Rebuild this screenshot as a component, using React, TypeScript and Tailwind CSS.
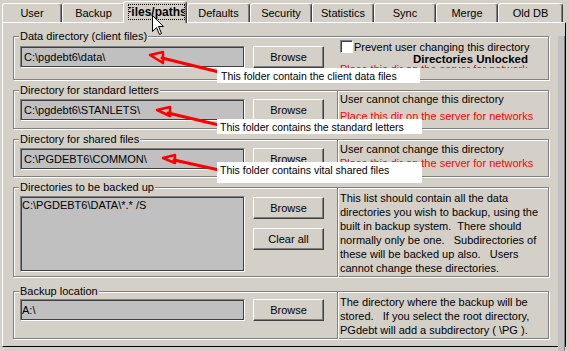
import React from "react";

type Kids = { children?: React.ReactNode; className?: string };

const Btn = ({ children, className = "" }: Kids) => (
  <div
    className={`flex h-[22px] w-[71px] items-center justify-center border border-t-white border-l-white border-r-[#404040] border-b-[#404040] bg-[#d4d0c8] shadow-[inset_-1px_-1px_0_#808080] ${className}`}
  >
    {children}
  </div>
);

const Field = ({ children, className = "" }: Kids) => (
  <div
    className={`flex h-[22px] w-[225px] items-center whitespace-nowrap border border-t-[#808080] border-l-[#808080] border-r-white border-b-white bg-[#c0c0c0] shadow-[inset_1px_1px_0_#404040,inset_-1px_-1px_0_#404040] ${className}`}
  >
    {children}
  </div>
);

const Group = ({ title, children, className = "" }: Kids & { title: string }) => (
  <div className={`relative border border-[#808080] shadow-[inset_1px_1px_0_#fff,1px_1px_0_#fff] ${className}`}>
    <span className="absolute -top-[7px] left-[5px] bg-[#d4d0c8] px-[1px] leading-[13px]">{title}</span>
    {children}
  </div>
);

const Note = ({ children, className = "" }: Kids) => (
  <div className={`border border-l-0 border-[#808080] pl-[2px] shadow-[inset_1px_1px_0_#fff,1px_1px_0_#fff] ${className}`}>
    {children}
  </div>
);

const Tab = ({ label, w }: { label: string; w: string }) => (
  <div
    className={`${w} flex h-[19px] items-center justify-center rounded-t-[3px] border-t border-l border-r border-t-white border-l-white border-r-[#404040] bg-[#d4d0c8] shadow-[inset_-1px_0_0_#808080]`}
  >
    {label}
  </div>
);

export default function App() {
  return (
    <div className="relative h-[351px] w-[569px] overflow-hidden bg-[#d4d0c8] font-['Liberation_Sans',Arial,sans-serif] text-[11px] leading-[13px] text-black">
      {/* tab strip */}
      <div className="flex h-[22px] items-end pl-[2px]">
        <Tab label="User" w="w-[60px]" />
        <Tab label="Backup" w="w-[63px]" />
        <div className="relative z-10 -mb-[1px] -ml-[2px] flex h-[22px] w-[64px] items-start rounded-t-[3px] border-t border-l border-r border-t-white border-l-white border-r-[#404040] bg-[#d4d0c8] pl-[4px] pt-[2px] shadow-[inset_-1px_0_0_#808080]">
          <div className="flex h-[16px] w-[57px] items-center overflow-hidden border border-dotted border-black px-[1px]">
            <span className="-ml-[6px] whitespace-nowrap text-[12px] font-bold">Files/paths</span>
          </div>
        </div>
        <Tab label="Defaults" w="w-[63px]" />
        <Tab label="Security" w="w-[62px]" />
        <Tab label="Statistics" w="w-[62px]" />
        <Tab label="Sync" w="w-[62px]" />
        <Tab label="Merge" w="w-[62px]" />
        <Tab label="Old DB" w="w-[65px]" />
      </div>

      {/* tab page */}
      <div className="ml-[2px] h-[325px] w-[564px] border border-t-white border-l-white border-r-black border-b-black">
        <div className="h-full border-r border-b border-[#808080]">
          <div className="h-full border-r-[6px] border-b-[2px] border-[#c0c0c0] pl-[10px]">
            {/* data directory */}
            <Group title="Data directory (client files)" className="mt-[13px] flex h-[44px] w-[536px]">
              <div className="flex gap-[8px] pl-[6px] pt-[9px]">
                <Field className="pl-[3px]">{"C:\\pgdebt6\\data\\"}</Field>
                <Btn>Browse</Btn>
              </div>
              <div className="ml-[16px] w-[188px] pt-[3px] leading-[12px]">
                <div className="flex h-[13px] items-center gap-[1px] whitespace-nowrap">
                  <div className="h-[13px] w-[13px] shrink-0 border border-t-[#808080] border-l-[#808080] border-r-white border-b-white bg-white shadow-[inset_1px_1px_0_#404040]" />
                  <span>Prevent user changing this directory</span>
                </div>
                <div className="whitespace-nowrap text-right text-[11.5px] font-bold">Directories Unlocked</div>
                {/* this line is clipped by the control below it */}
                <div className="-mt-[1px] h-[4px] overflow-hidden">
                  <div className="-mt-[1px] whitespace-nowrap text-[#ff0000]">Place this dir on the server for networks</div>
                </div>
              </div>
            </Group>

            {/* standard letters */}
            <div className="mt-[10px] flex">
              <Group title="Directory for standard letters" className="flex h-[39px] w-[325px] gap-[8px] pl-[6px] pt-[8px]">
                <Field className="pl-[3px]">{"C:\\pgdebt6\\STANLETS\\"}</Field>
                <Btn>Browse</Btn>
              </Group>
              <Note className="h-[39px] w-[211px] whitespace-nowrap pt-[2px] leading-[12px]">
                <div>User cannot change this directory</div>
                <div className="mt-[5px] text-[#ff0000]">Place this dir on the server for networks</div>
              </Note>
            </div>

            {/* shared files */}
            <div className="mt-[10px] flex">
              <Group title="Directory for shared files" className="flex h-[38px] w-[325px] gap-[8px] pl-[6px] pt-[8px]">
                <Field className="pl-[3px]">{"C:\\PGDEBT6\\COMMON\\"}</Field>
                <Btn>Browse</Btn>
              </Group>
              <Note className="h-[38px] w-[211px] whitespace-nowrap pt-[3px] leading-[12px]">
                <div>User cannot change this directory</div>
                <div className="mt-[2px] text-[#ff0000]">Place this dir on the server for networks</div>
              </Note>
            </div>

            {/* backup list */}
            <div className="mt-[10px] flex">
              <Group title="Directories to be backed up" className="flex h-[90px] w-[325px] gap-[8px] pl-[6px] pt-[8px]">
                <div className="h-[76px] w-[225px] whitespace-nowrap border border-t-[#808080] border-l-[#808080] border-r-white border-b-white bg-[#c0c0c0] pl-[1px] pt-[2px] shadow-[inset_1px_1px_0_#404040,inset_-1px_-1px_0_#404040]">
                  {"C:\\PGDEBT6\\DATA\\*.* /S"}
                </div>
                <div className="flex flex-col gap-[9px] pt-[1px]">
                  <Btn>Browse</Btn>
                  <Btn>Clear all</Btn>
                </div>
              </Group>
              <Note className="h-[90px] w-[211px] whitespace-pre pt-[3px] leading-[14px]">
                <div>This list should contain all the data</div>
                <div>directories you wish to backup, using the</div>
                <div>built in backup system.  There should</div>
                <div>normally only be one.   Subdirectories of</div>
                <div>these will be backed up also.   Users</div>
                <div>cannot change these directories.</div>
              </Note>
            </div>

            {/* backup location */}
            <div className="mt-[14px] flex">
              <Group title="Backup location" className="flex h-[48px] w-[325px] gap-[8px] pl-[6px] pt-[7px]">
                <Field className="pl-[1px]">{"A:\\"}</Field>
                <Btn>Browse</Btn>
              </Group>
              <Note className="h-[48px] w-[211px] whitespace-pre pt-[3px] leading-[14px]">
                <div>The directory where the backup will be</div>
                <div>stored.   If you select the root directory,</div>
                <div>{"PGdebt will add a subdirectory ( \\PG )."}</div>
              </Note>
            </div>
          </div>
        </div>
      </div>

      {/* red annotation arrows */}
      <svg className="pointer-events-none absolute left-0 top-0" width="569" height="351">
        <g stroke="#ff0000" fill="none" strokeLinecap="round" strokeLinejoin="round">
          <path d="M162 58 L219 72" strokeWidth="3" />
          <path d="M150 55 L163 52 L163 63 Z" strokeWidth="2.5" />
          <path d="M168 113 L219 125" strokeWidth="3" />
          <path d="M157 110 L170 107 L170 116 Z" strokeWidth="2.5" />
          <path d="M174 160 L219 170" strokeWidth="3" />
          <path d="M163 158 L175 155 L175 163 Z" strokeWidth="2.5" />
        </g>
      </svg>

      {/* annotation labels */}
      <div className="absolute left-[217px] top-[68px] h-[15px] w-[203px] whitespace-nowrap bg-white pl-[4px] pt-[2px] text-[10.5px] leading-[13px]">
        This folder contain the client data files
      </div>
      <div className="absolute left-[217px] top-[119px] h-[15px] w-[205px] whitespace-nowrap bg-white pl-[3px] pt-[2px] text-[10.5px] leading-[13px]">
        This folder contains the standard letters
      </div>
      <div className="absolute left-[217px] top-[162px] h-[21px] w-[205px] whitespace-nowrap bg-white pl-[3px] pt-[2px] text-[10.5px] leading-[13px]">
        This folder contains vital shared files
      </div>

      {/* mouse pointer */}
      <svg className="pointer-events-none absolute left-[152px] top-[15px] z-20" width="13" height="21" viewBox="0 0 13 21">
        <path d="M0.5 0.5 V16.5 L4.5 12.5 L7.5 19.5 L9.5 18.5 L6.5 11.5 H11.5 Z" fill="#fff" stroke="#000" strokeWidth="1" />
      </svg>
    </div>
  );
}
